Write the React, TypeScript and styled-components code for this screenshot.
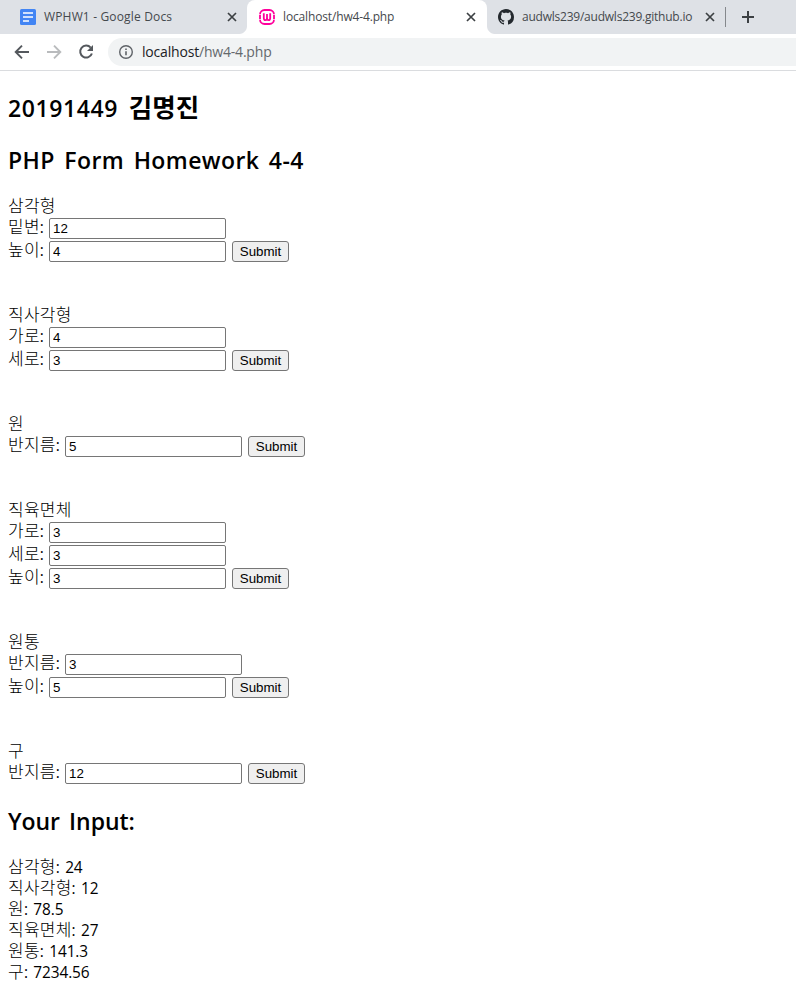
import React from "react";
import styled, { createGlobalStyle } from "styled-components";

const Global = createGlobalStyle`
  * { box-sizing: border-box; }
  body { margin: 0; background: #fff; color: #000; overflow: hidden;
    font-family: "Open Sans", "Noto Sans CJK KR", sans-serif; font-size: 16px; }
`;

const Window = styled.div`
  width: 796px;
  height: 1008px;
  overflow: hidden;
  background: #fff;
`;
const TabStrip = styled.div`
  display: flex;
  height: 34px;
  background: #dee1e6;
`;
const Tab = styled.div<{ $width: number; $active?: boolean }>`
  position: relative;
  display: flex;
  align-items: center;
  width: ${(p) => p.$width}px;
  height: 34px;
  padding-left: ${(p) => (p.$active ? 12 : 11)}px;
  background: ${(p) => (p.$active ? "#fff" : "transparent")};
  border-radius: 8px 8px 0 0;
  &::before, &::after {
    content: "";
    display: ${(p) => (p.$active ? "block" : "none")};
    position: absolute;
    bottom: 0;
    width: 8px;
    height: 8px;
  }
  &::before { left: -8px; background: radial-gradient(circle at 0 0, transparent 7.5px, #fff 8.5px); }
  &::after { right: -8px; background: radial-gradient(circle at 100% 0, transparent 7.5px, #fff 8.5px); }
`;
const FirstTab = styled(Tab)`
  padding-left: 20px;
`;
const Favicon = styled.svg`
  flex: none;
  width: 16px;
  height: 16px;
`;
const TabTitle = styled.span<{ $width: number; $spacing: number }>`
  flex: none;
  width: ${(p) => p.$width}px;
  margin-left: 8px;
  font-size: 12px;
  line-height: 16px;
  letter-spacing: ${(p) => p.$spacing}px;
  color: #45494d;
  white-space: nowrap;
`;
const CloseIcon = styled.svg`
  flex: none;
  width: 10px;
  height: 10px;
`;
const Divider = styled.div`
  width: 1px;
  height: 20px;
  margin-top: 7px;
  background: #85888c;
`;
const PlusIcon = styled.svg`
  width: 14px;
  height: 14px;
  margin: 10px 0 0 15px;
`;
const Toolbar = styled.div`
  display: flex;
  align-items: center;
  height: 37px;
  padding: 0 0 1px 14px;
  border-bottom: 1px solid #dadcdf;
`;
const NavIcon = styled.svg`
  flex: none;
  width: 16px;
  height: 16px;
  margin-right: 16px;
`;
const AddressBar = styled.div`
  display: flex;
  align-items: center;
  flex: 1;
  height: 28px;
  margin-left: -2px;
  padding-left: 10px;
  border-radius: 14px 0 0 14px;
  background: #f1f3f4;
`;
const Url = styled.span`
  margin-left: 8px;
  font-size: 14px;
  line-height: 20px;
  letter-spacing: -0.19px;
  color: #202124;
`;
const UrlPath = styled.span`
  color: #64686c;
`;
const Page = styled.main`
  padding: 0 8px;
`;
const Heading = styled.h2<{ $spacing: number }>`
  height: 32px;
  margin: 20px 0;
  font-size: 23px;
  line-height: 35px;
  font-weight: 600;
  letter-spacing: ${(p) => p.$spacing}px;
  word-spacing: 3.2px;
  white-space: nowrap;
`;
const HangulHeading = styled.span`
  font-family: "Noto Sans CJK KR", sans-serif;
  font-size: 25.5px;
  line-height: 0;
  font-weight: 700;
  margin-left: 1px;
  letter-spacing: 0;
`;
const Form = styled.form`
  margin-bottom: 42px;
  &:last-of-type { margin-bottom: 0; }
`;
const Line = styled.div`
  height: 21px;
  line-height: 19px;
  font-size: 15.4px;
  letter-spacing: -0.1px;
  word-spacing: 1.6px;
  white-space: nowrap;
`;
const Hangul = styled.span`
  font-family: "Noto Sans CJK KR", sans-serif;
  font-size: 17px;
  font-weight: 300;
  letter-spacing: 0.25px;
`;
const FieldRow = styled.div`
  display: flex;
  align-items: flex-end;
  height: 23px;
`;
const Label = styled.label<{ $wide: boolean }>`
  width: ${(p) => (p.$wide ? 57 : 41)}px;
  height: 23px;
  line-height: 20px;
  font-size: 15.4px;
  white-space: nowrap;
`;
const Input = styled.input`
  width: 177px;
  height: 21px;
  padding: 1px 3px;
  border: 1px solid #767676;
  border-radius: 2px;
  background: #fff;
  color: #000;
  font: 13.333px "Liberation Sans", Arial, sans-serif;
`;
const Submit = styled.button`
  width: 57px;
  height: 21px;
  margin-left: 6px;
  padding: 0;
  border: 1px solid #767676;
  border-radius: 3px;
  background: #efefef;
  color: #000;
  font: 13.333px "Liberation Sans", Arial, sans-serif;
`;

const Close = () => (
  <CloseIcon viewBox="0 0 10 10" stroke="#3c4043" strokeWidth="1.7">
    <path d="M1 1l8 8M9 1l-8 8" />
  </CloseIcon>
);

const shapes: { name: string; fields: [string, string][] }[] = [
  { name: "삼각형", fields: [["밑변", "12"], ["높이", "4"]] },
  { name: "직사각형", fields: [["가로", "4"], ["세로", "3"]] },
  { name: "원", fields: [["반지름", "5"]] },
  { name: "직육면체", fields: [["가로", "3"], ["세로", "3"], ["높이", "3"]] },
  { name: "원통", fields: [["반지름", "3"], ["높이", "5"]] },
  { name: "구", fields: [["반지름", "12"]] },
];

const results: [string, string][] = [
  ["삼각형", "24"],
  ["직사각형", "12"],
  ["원", "78.5"],
  ["직육면체", "27"],
  ["원통", "141.3"],
  ["구", "7234.56"],
];

export default function App() {
  return (
    <Window>
      <Global />
      <TabStrip>
        <FirstTab $width={247}>
          <Favicon viewBox="0 0 16 16">
            <rect width="16" height="16" rx="1.5" fill="#4285f4" />
            <path d="M3 4h10M3 8h10M3 12h6" stroke="#fff" strokeWidth="1.7" />
          </Favicon>
          <TabTitle $width={183} $spacing={0.16}>WPHW1 - Google Docs</TabTitle>
          <Close />
        </FirstTab>
        <Tab $width={240} $active>
          <Favicon viewBox="0 0 16 16" fill="none" stroke="#ff009c">
            <rect x="1" y="1" width="14" height="14" rx="4.5" strokeWidth="1.8" />
            <path d="M4.8 4.3v4.6q0 2.2 1.6 2.2T8 9V5v4q0 2.1 1.6 2.1t1.6-2.2V4.3" strokeWidth="1.8" />
            <path d="M0 5.5h2M0 10.5h2M14 5.5h2M14 10.5h2" stroke="#fff" strokeWidth=".7" />
          </Favicon>
          <TabTitle $width={183} $spacing={-0.15}>localhost/hw4-4.php</TabTitle>
          <Close />
        </Tab>
        <Tab $width={238}>
          <Favicon viewBox="0 0 16 16" fill="#24292e">
            <path d="M8 0C3.58 0 0 3.58 0 8c0 3.54 2.29 6.53 5.47 7.59.4.07.55-.17.55-.38 0-.19-.01-.82-.01-1.49-2.01.37-2.53-.49-2.69-.94-.09-.23-.48-.94-.82-1.13-.28-.15-.68-.52-.01-.53.63-.01 1.08.58 1.23.82.72 1.21 1.87.87 2.33.66.07-.52.28-.87.51-1.07-1.78-.2-3.64-.89-3.64-3.95 0-.87.31-1.59.82-2.15-.08-.2-.36-1.02.08-2.12 0 0 .67-.21 2.2.82.64-.18 1.32-.27 2-.27s1.36.09 2 .27c1.53-1.04 2.2-.82 2.2-.82.44 1.1.16 1.92.08 2.12.51.56.82 1.27.82 2.15 0 3.07-1.87 3.75-3.65 3.95.29.25.54.73.54 1.48 0 1.07-.01 1.93-.01 2.2 0 .21.15.46.55.38A8.01 8.01 0 0 0 16 8c0-4.42-3.58-8-8-8z" />
          </Favicon>
          <TabTitle $width={183} $spacing={-0.23}>audwls239/audwls239.github.io</TabTitle>
          <Close />
        </Tab>
        <Divider />
        <PlusIcon viewBox="0 0 14 14" stroke="#3c4043" strokeWidth="2">
          <path d="M7 1v12M1 7h12" />
        </PlusIcon>
      </TabStrip>
      <Toolbar>
        <NavIcon viewBox="0 0 16 16" fill="none" stroke="#54585d" strokeWidth="1.9">
          <path d="M15 8H2M8 1.7L1.7 8 8 14.3" />
        </NavIcon>
        <NavIcon viewBox="0 0 16 16" fill="none" stroke="#b9bbbd" strokeWidth="1.9">
          <path d="M1 8h13M8 1.7L14.3 8 8 14.3" />
        </NavIcon>
        <NavIcon viewBox="0 0 16 16" fill="none" stroke="#54585d" strokeWidth="2">
          <path d="M12.7 3.6A6 6 0 1 0 13.9 9.5" />
          <path d="M15 1v6H9z" fill="#54585d" stroke="none" />
        </NavIcon>
        <AddressBar>
          <Favicon viewBox="0 0 16 16" fill="none" stroke="#5f6368">
            <circle cx="8" cy="8" r="6.3" strokeWidth="1.4" />
            <path d="M8 7.2v4M8 4.5v1.6" strokeWidth="1.6" />
          </Favicon>
          <Url>localhost<UrlPath>/hw4-4.php</UrlPath></Url>
        </AddressBar>
      </Toolbar>
      <Page>
        <Heading $spacing={0.6}>20191449 <HangulHeading>김명진</HangulHeading></Heading>
        <Heading $spacing={0.4}>PHP Form Homework 4-4</Heading>
        {shapes.map((shape) => (
          <Form key={shape.name} onSubmit={(e) => e.preventDefault()}>
            <Line><Hangul>{shape.name}</Hangul></Line>
            {shape.fields.map(([label, value], i) => (
              <FieldRow key={label}>
                <Label $wide={label.length > 2}><Hangul>{label}</Hangul>:</Label>
                <Input type="text" defaultValue={value} aria-label={label} />
                {i === shape.fields.length - 1 && <Submit type="submit">Submit</Submit>}
              </FieldRow>
            ))}
          </Form>
        ))}
        <Heading $spacing={-0.05}>Your Input:</Heading>
        {results.map(([name, value]) => (
          <Line key={name}><Hangul>{name}</Hangul>: {value}</Line>
        ))}
      </Page>
    </Window>
  );
}
